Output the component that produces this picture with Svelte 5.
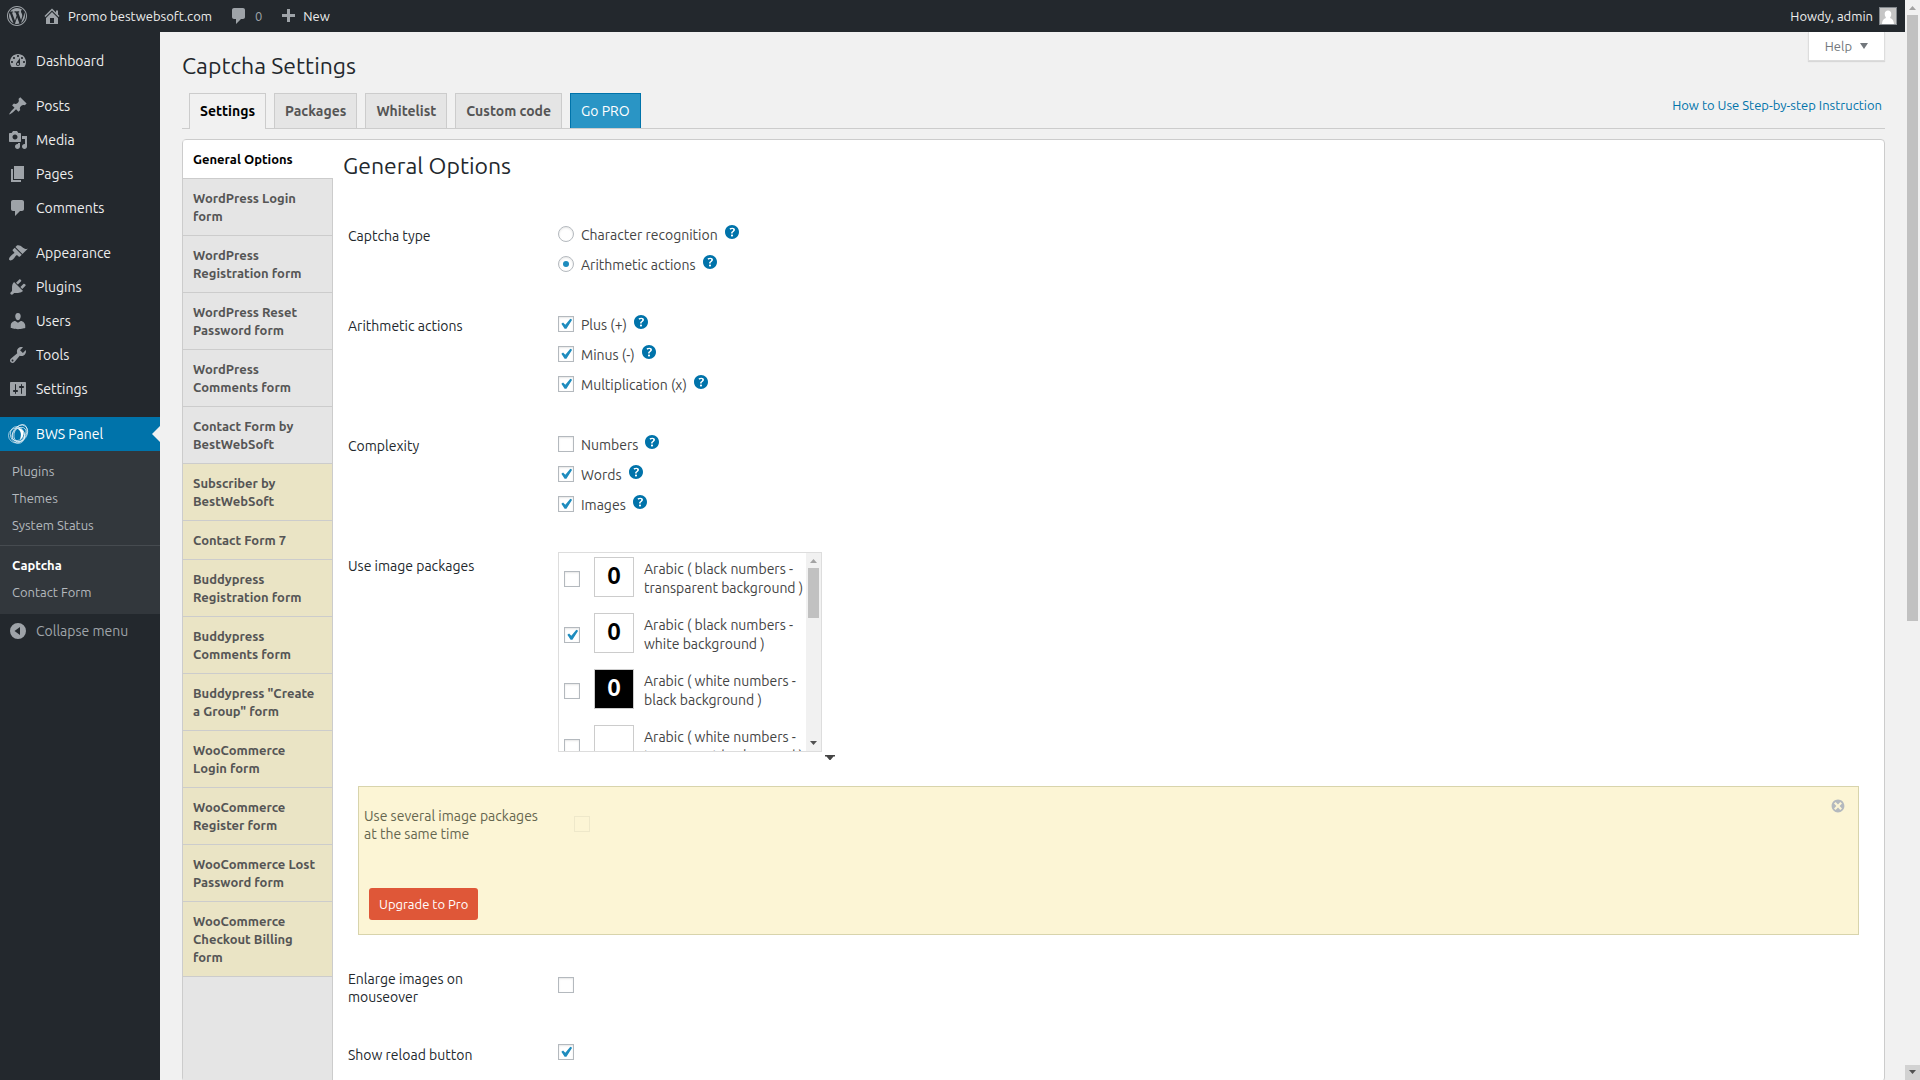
<script lang="ts">
    type MenuItem = { label: string; icon: string; gap?: boolean };

    const icons: Record<string, string> = {
        wordpress: "M20 10c0-5.52-4.48-10-10-10S0 4.48 0 10s4.48 10 10 10 10-4.48 10-10zM10 1.01c4.97 0 8.99 4.02 8.99 8.99s-4.02 8.99-8.99 8.99S1.01 14.97 1.01 10 5.03 1.01 10 1.01zM8.01 14.82L4.96 6.61c.49-.03 1.05-.08 1.05-.08.43-.05.38-1.01-.06-.99 0 0-1.29.1-2.13.1-.15 0-.33 0-.52-.01 1.44-2.17 3.9-3.6 6.7-3.6 2.09 0 3.99.79 5.41 2.09-.6-.08-1.45.35-1.45 1.42 0 .66.38 1.22.79 1.88.31.54.5 1.22.5 2.21 0 1.34-1.27 4.48-1.27 4.48l-2.71-7.5c.48-.03.75-.16.75-.16.43-.05.38-1.1-.05-1.08 0 0-1.3.11-2.14.11-.78 0-2.11-.11-2.11-.11-.43-.02-.48 1.06-.05 1.08l.84.08 1.12 3.04zm6.02 2.15L16.64 10s.67-1.69.39-3.81c.63 1.14.94 2.42.94 3.81 0 2.96-1.56 5.58-3.94 6.97zM2.68 6.77L6.5 17.25c-2.67-1.3-4.47-4.08-4.47-7.25 0-1.16.2-2.23.65-3.23zm7.45 4.53l2.29 6.25c-.75.27-1.57.42-2.42.42-.72 0-1.41-.11-2.06-.3z",
        home: "M16 8.5l1.53 1.53-1.06 1.06L10 4.6l-6.47 6.49-1.06-1.06L10 2.5l4 4v-2h2v4zm-6-2.46l6 5.99V18H4v-5.97zM12 17v-5H8v5h4z",
        plus: "M17 8v3h-5v5H9v-5H4V8h5V3h3v5z",
        dashboard: "M3.76 16h12.48c1.1-1.37 1.76-3.11 1.76-5 0-4.42-3.58-8-8-8s-8 3.58-8 8c0 1.89.66 3.63 1.76 5zM10 4c.55 0 1 .45 1 1s-.45 1-1 1-1-.45-1-1 .45-1 1-1zM6 6c.55 0 1 .45 1 1s-.45 1-1 1-1-.45-1-1 .45-1 1-1zm8 0c.55 0 1 .45 1 1s-.45 1-1 1-1-.45-1-1 .45-1 1-1zm-5.37 5.55L12 7v6c0 1.1-.9 2-2 2s-2-.9-2-2c0-.57.24-1.08.63-1.45zM4 10c.55 0 1 .45 1 1s-.45 1-1 1-1-.45-1-1 .45-1 1-1zm12 0c.55 0 1 .45 1 1s-.45 1-1 1-1-.45-1-1 .45-1 1-1zm-5 3c0-.55-.45-1-1-1s-1 .45-1 1 .45 1 1 1 1-.45 1-1z",
        post: "M10.44 3.02l1.82-1.82 6.36 6.35-1.83 1.82c-1.05-.68-2.48-.57-3.41.36l-.75.75c-.92.93-1.04 2.35-.35 3.41l-1.83 1.82-2.41-2.41-2.8 2.79c-.42.42-3.38 2.71-3.8 2.29s1.86-3.39 2.28-3.81l2.79-2.79L4.1 9.36l1.83-1.82c1.05.69 2.48.57 3.4-.36l.75-.75c.93-.92 1.05-2.35.36-3.41z",
        media: "M13 11V4c0-.55-.45-1-1-1h-1.67L9 1H5L3.67 3H2c-.55 0-1 .45-1 1v7c0 .55.45 1 1 1h10c.55 0 1-.45 1-1zM7 4.5c1.38 0 2.5 1.12 2.5 2.5S8.38 9.5 7 9.5 4.5 8.38 4.5 7 5.62 4.5 7 4.5zM14 6h5v10.5c0 1.38-1.12 2.5-2.5 2.5S14 17.88 14 16.5s1.12-2.5 2.5-2.5c.17 0 .34.02.5.05V9h-3V6zm-4 8.05V13h2v3.5c0 1.38-1.12 2.5-2.5 2.5S7 17.88 7 16.5 8.12 14 9.5 14c.17 0 .34.02.5.05z",
        page: "M6 15V2h10v13H6zm-1 1h8v2H3V5h2v11z",
        comment: "M5 2h9c1.1 0 2 .9 2 2v7c0 1.1-.9 2-2 2h-2l-5 5v-5H5c-1.1 0-2-.9-2-2V4c0-1.1.9-2 2-2z",
        appearance: "M14.48 11.06L7.41 3.99l1.5-1.5c.5-.56 2.3-.47 3.51.32 1.21.8 1.43 1.28 2.91 2.1 1.18.64 2.45 1.26 4.45.85zm-.71.71L6.7 4.7 4.93 6.47c-.39.39-.39 1.02 0 1.41l1.06 1.06c.39.39.39 1.03 0 1.42-.6.6-1.43 1.11-2.21 1.69-.35.26-.7.53-1.01.84C1.43 14.23.4 16.08 1.4 17.07c.99 1 2.84-.03 4.18-1.36.31-.31.58-.66.85-1.02.57-.78 1.08-1.61 1.69-2.21.39-.39 1.02-.39 1.41 0l1.06 1.06c.39.39 1.02.39 1.41 0z",
        plugin: "M13.11 4.36L9.87 7.6 8 5.73l3.24-3.24c.35-.34 1.05-.2 1.56.32.52.51.66 1.21.31 1.55zm-8 1.77l.91-1.12 9.01 9.01-1.19.84c-.71.71-2.63 1.16-3.82 1.16H6.14L4.9 17.26c-.59.59-1.54.59-2.12 0-.59-.58-.59-1.53 0-2.12l1.24-1.24v-3.88c0-1.13.4-3.19 1.09-3.89zm7.26 3.97l3.24-3.24c.34-.35 1.04-.21 1.55.31.52.51.66 1.21.31 1.55l-3.24 3.25z",
        user: "M10 9.25c-2.27 0-2.73-3.44-2.73-3.44C7 4.02 7.82 2 9.97 2c2.16 0 2.98 2.02 2.71 3.81 0 0-.41 3.44-2.68 3.44zm0 2.57L12.72 10c2.39 0 4.52 2.33 4.52 4.53v2.49s-3.65 1.13-7.24 1.13c-3.65 0-7.24-1.13-7.24-1.13v-2.49c0-2.25 1.94-4.48 4.47-4.48z",
        tool: "M16.68 9.77c-1.34 1.34-3.3 1.67-4.95.99l-5.41 6.52c-.99.99-2.59.99-3.58 0s-.99-2.59 0-3.57l6.52-5.42c-.68-1.65-.35-3.61.99-4.95 1.28-1.28 3.12-1.62 4.72-1.06l-2.89 2.89 2.82 2.82 2.86-2.87c.53 1.58.18 3.39-1.08 4.65zM3.81 16.21c.4.39 1.04.39 1.43 0 .4-.4.4-1.04 0-1.43-.39-.4-1.03-.4-1.43 0-.39.39-.39 1.03 0 1.43z",
        settings: "M18 16V4c0-.55-.45-1-1-1H3c-.55 0-1 .45-1 1v12c0 .55.45 1 1 1h14c.55 0 1-.45 1-1zM8 11h1c.55 0 1 .45 1 1s-.45 1-1 1H8v1.5c0 .28-.22.5-.5.5s-.5-.22-.5-.5V13H6c-.55 0-1-.45-1-1s.45-1 1-1h1V5.5c0-.28.22-.5.5-.5s.5.22.5.5V11zm5-2h-1c-.55 0-1-.45-1-1s.45-1 1-1h1V5.5c0-.28.22-.5.5-.5s.5.22.5.5V7h1c.55 0 1 .45 1 1s-.45 1-1 1h-1v5.5c0 .28-.22.5-.5.5s-.5-.22-.5-.5V9z",
        help: "M17 10c0-3.87-3.14-7-7-7-3.87 0-7 3.13-7 7s3.13 7 7 7c3.86 0 7-3.13 7-7zm-6.3 1.48H9.14v-.43c0-.38.08-.7.24-.98s.46-.57.88-.89c.41-.29.68-.53.81-.71.14-.18.2-.39.2-.62 0-.25-.09-.44-.28-.58-.19-.13-.45-.19-.79-.19-.58 0-1.25.19-2 .57l-.64-1.28c.87-.49 1.8-.74 2.77-.74.81 0 1.45.2 1.92.58.48.39.71.91.71 1.55 0 .43-.09.8-.29 1.11-.19.32-.57.67-1.11 1.06-.38.28-.61.49-.71.63-.1.15-.15.34-.15.57v.35zm-1.47 2.74c-.18-.17-.27-.42-.27-.73 0-.33.08-.58.26-.75s.43-.25.77-.25c.32 0 .57.09.75.26s.27.42.27.74c0 .3-.09.55-.27.72-.18.18-.43.27-.75.27-.33 0-.58-.09-.76-.26z",
        dismiss: "M10 2c4.42 0 8 3.58 8 8s-3.58 8-8 8-8-3.58-8-8 3.58-8 8-8zm5 11l-3-3 3-3-2-2-3 3-3-3-2 2 3 3-3 3 2 2 3-3 3 3z",
        collapse: "M10 2a8 8 0 1 0 0 16a8 8 0 1 0 0-16zM12 6v8l-5.500-4z",
    };

    const menu: MenuItem[] = [
        { label: "Dashboard", icon: "dashboard" },
        { label: "Posts", icon: "post", gap: true },
        { label: "Media", icon: "media" },
        { label: "Pages", icon: "page" },
        { label: "Comments", icon: "comment" },
        { label: "Appearance", icon: "appearance", gap: true },
        { label: "Plugins", icon: "plugin" },
        { label: "Users", icon: "user" },
        { label: "Tools", icon: "tool" },
        { label: "Settings", icon: "settings" },
    ];

    const tabs = ["Settings", "Packages", "Whitelist", "Custom code"];

    const sections = [
        { label: "General Options" },
        { label: "WordPress Login form" },
        { label: "WordPress Registration form" },
        { label: "WordPress Reset Password form" },
        { label: "WordPress Comments form" },
        { label: "Contact Form by BestWebSoft" },
        { label: "Subscriber by BestWebSoft", pro: true },
        { label: "Contact Form 7", pro: true },
        { label: "Buddypress Registration form", pro: true },
        { label: "Buddypress Comments form", pro: true },
        { label: 'Buddypress "Create a Group" form', pro: true },
        { label: "WooCommerce Login form", pro: true },
        { label: "WooCommerce Register form", pro: true },
        { label: "WooCommerce Lost Password form", pro: true },
        { label: "WooCommerce Checkout Billing form", pro: true },
    ];

    let captchaType = $state("math");
    const types = [
        { value: "recognition", label: "Character recognition" },
        { value: "math", label: "Arithmetic actions" },
    ];

    const groups = $state([
        {
            title: "Arithmetic actions",
            options: [
                { label: "Plus (+)", checked: true },
                { label: "Minus (-)", checked: true },
                { label: "Multiplication (x)", checked: true },
            ],
        },
        {
            title: "Complexity",
            options: [
                { label: "Numbers", checked: false },
                { label: "Words", checked: true },
                { label: "Images", checked: true },
            ],
        },
    ]);

    const packages = $state([
        { label: "Arabic ( black numbers - transparent background )", checked: false, style: "light" },
        { label: "Arabic ( black numbers - white background )", checked: true, style: "light" },
        { label: "Arabic ( white numbers - black background )", checked: false, style: "dark" },
        { label: "Arabic ( white numbers - transparent background )", checked: false, style: "blank" },
    ]);

    let enlarge = $state(false);
    let reload = $state(true);
</script>

{#snippet icon(name: string)}
    <svg class="icon" viewBox="0 0 20 20" aria-hidden="true">
        <path d={icons[name]} fill-rule={name === "collapse" ? "evenodd" : "nonzero"} />
    </svg>
{/snippet}

{#snippet help()}
    <button class="help" type="button" aria-label="Help">{@render icon("help")}</button>
{/snippet}

{#snippet scrollbar(kind: string)}
    <div class="scrollbar {kind}" aria-hidden="true">
        <svg viewBox="0 0 15 15"><path class="up" d="M4 10h7l-3.500-4z" /></svg>
        <div class="track"><div class="thumb"></div></div>
        <svg class="end" viewBox="0 0 15 15"><path class="down" d="M4 5h7l-3.500 4z" /></svg>
    </div>
{/snippet}

<div class="screen">
    <div class="page">
        <header class="adminbar">
            <a class="wp" href="#about" aria-label="About WordPress">{@render icon("wordpress")}</a>
            <a class="site" href="#site">{@render icon("home")}Promo bestwebsoft.com</a>
            <a class="count" href="#comments">{@render icon("comment")}0</a>
            <a class="new" href="#new">{@render icon("plus")}New</a>
            <a class="account" href="#profile">
                Howdy, admin
                <svg class="avatar" viewBox="0 0 16 16" aria-hidden="true">
                    <rect width="16" height="16" fill="#c5c5c5" />
                    <path d="M8 2.500c2 0 3.300 1.500 3.300 3.500S10 9.500 10 10c1.500.8 3.500 1 4 6H2c.5-5 2.500-5.200 4-6 0-.5-1.300-2-1.300-4S6 2.500 8 2.500z" fill="#fff" />
                </svg>
            </a>
        </header>

        <div class="body">
            <nav class="sidebar">
                {#each menu as item}
                    <a class="menu-item" class:gap={item.gap} href="#{item.icon}">
                        {@render icon(item.icon)}{item.label}
                    </a>
                {/each}
                <a class="menu-item gap current" href="#bws">
                    <svg class="icon bws" viewBox="0 0 20 20" aria-hidden="true">
                        <ellipse cx="8.500" cy="11.500" rx="8" ry="7.500" />
                        <ellipse cx="9.500" cy="11" rx="7" ry="8.500" transform="rotate(-20 9.500 11)" />
                        <ellipse cx="12.500" cy="9" rx="6" ry="9" transform="rotate(25 12.500 9)" />
                        <ellipse cx="12" cy="9.500" rx="7" ry="9" transform="rotate(35 12 9.500)" />
                        <ellipse cx="11" cy="10" rx="5.500" ry="8" transform="rotate(50 11 10)" />
                        <path d="M9.500 4.500c4-.5 6.500 2 6 6-.3 2.500-1.500 4-3.500 5 1.500-4.500 1.500-8-2.500-11z" />
                    </svg>
                    BWS Panel
                </a>
                <div class="submenu">
                    <a href="#plugins">Plugins</a>
                    <a href="#themes">Themes</a>
                    <a href="#status">System Status</a>
                    <hr />
                    <a class="active" href="#captcha">Captcha</a>
                    <a href="#contact">Contact Form</a>
                </div>
                <button class="menu-item collapse" type="button">{@render icon("collapse")}Collapse menu</button>
            </nav>

            <main>
                <div class="heading">
                    <h1>Captcha Settings</h1>
                    <button class="help-tab" type="button">
                        Help
                        <svg viewBox="0 0 8 6" aria-hidden="true"><path d="M0 0h8L4 6z" /></svg>
                    </button>
                </div>

                <nav class="tabs">
                    {#each tabs as tab, i}
                        <a class="tab" class:active={i === 0} href="#{tab}">{tab}</a>
                    {/each}
                    <a class="tab pro" href="#pro">Go PRO</a>
                    <a class="howto" href="#instruction">How to Use Step-by-step Instruction</a>
                </nav>

                <div class="panel">
                    <nav class="sections">
                        {#each sections as section, i}
                            <a class:active={i === 0} class:pro={section.pro} href="#section-{i}">{section.label}</a>
                        {/each}
                    </nav>

                    <form class="options">
                        <h2>General Options</h2>

                        <div class="row" role="radiogroup" aria-labelledby="type-title">
                            <div class="title" id="type-title">Captcha type</div>
                            <div class="choices">
                                {#each types as type}
                                    <div class="choice">
                                        <label>
                                            <input type="radio" name="type" value={type.value} bind:group={captchaType} />
                                            {type.label}
                                        </label>
                                        {@render help()}
                                    </div>
                                {/each}
                            </div>
                        </div>

                        {#each groups as group, i}
                            <div class="row" role="group" aria-labelledby="group-{i}">
                                <div class="title" id="group-{i}">{group.title}</div>
                                <div class="choices">
                                    {#each group.options as option}
                                        <div class="choice">
                                            <label>
                                                <input type="checkbox" bind:checked={option.checked} />
                                                {option.label}
                                            </label>
                                            {@render help()}
                                        </div>
                                    {/each}
                                </div>
                            </div>
                        {/each}

                        <div class="row" role="group" aria-labelledby="packages-title">
                            <div class="title" id="packages-title">Use image packages</div>
                            <div class="packages-wrap">
                                <div class="packages">
                                    <div class="list">
                                        {#each packages as pack}
                                            <label class="package">
                                                <input type="checkbox" bind:checked={pack.checked} />
                                                <span class="sample {pack.style}">0</span>
                                                <span class="name">{pack.label}</span>
                                            </label>
                                        {/each}
                                    </div>
                                    {@render scrollbar("inner")}
                                </div>
                                <svg class="grip" viewBox="0 0 10 5" aria-hidden="true"><path d="M0 0h10v1.500H8.500L5.500 5h-1L1.500 1.500H0z" /></svg>
                            </div>
                        </div>

                        <div class="promo">
                            <div class="promo-row">
                                <label for="several">Use several image packages at the same time</label>
                                <input id="several" type="checkbox" disabled />
                            </div>
                            <button class="dismiss" type="button" aria-label="Close">{@render icon("dismiss")}</button>
                            <a class="upgrade" href="#upgrade">Upgrade to Pro</a>
                        </div>

                        <div class="row single">
                            <label class="title" for="enlarge">Enlarge images on mouseover</label>
                            <input id="enlarge" type="checkbox" bind:checked={enlarge} />
                        </div>
                        <div class="row single">
                            <label class="title" for="reload">Show reload button</label>
                            <input id="reload" type="checkbox" bind:checked={reload} />
                        </div>
                    </form>
                </div>
            </main>
        </div>
    </div>
    {@render scrollbar("outer")}
</div>

<style>
    :global(body) {
        background: #f1f1f1;
        color: #444;
        font: 14px/20px Ubuntu, "Noto Sans", sans-serif;
    }
    * {
        box-sizing: border-box;
    }
    a {
        color: inherit;
        text-decoration: none;
    }
    button {
        padding: 0;
        border: 0;
        background: none;
        color: inherit;
        font: inherit;
        cursor: pointer;
    }
    .icon {
        width: 20px;
        height: 20px;
        fill: #9ea3a8;
        flex: none;
    }
    .screen {
        display: flex;
        height: 100vh;
        overflow: hidden;
    }
    .page {
        flex: 1;
        min-width: 0;
        display: flex;
        flex-direction: column;
    }

    .adminbar {
        display: flex;
        flex: none;
        height: 32px;
        padding: 0 8px 0 7px;
        background: #23282d;
        color: #eee;
        font-size: 13px;
        line-height: 32px;
    }
    .adminbar a {
        display: flex;
        align-items: center;
        gap: 6px;
    }
    .wp {
        margin-right: 15px;
    }
    .site {
        margin-right: 17px;
    }
    .count {
        margin-right: 16px;
        color: #9ea3a8;
    }
    .adminbar .new {
        gap: 5px;
    }
    .account {
        margin-left: auto;
    }
    .avatar {
        width: 18px;
        height: 18px;
        border: 1px solid #82878c;
    }

    .body {
        display: flex;
        flex: 1;
    }
    .sidebar {
        width: 160px;
        flex: none;
        padding-top: 12px;
        background: #23282d;
        color: #eee;
    }
    .menu-item {
        display: flex;
        align-items: center;
        gap: 8px;
        width: 100%;
        height: 34px;
        padding-left: 8px;
    }
    .gap {
        margin-top: 11px;
    }
    .current {
        position: relative;
        background: #0073aa;
        color: #fff;
    }
    .current::after {
        content: "";
        position: absolute;
        right: 0;
        top: 9px;
        border: 8px solid transparent;
        border-left: 0;
        border-right-color: #f1f1f1;
    }
    .bws {
        overflow: visible;
    }
    .bws ellipse {
        fill: none;
        stroke: #fff;
        stroke-width: 0.6;
    }
    .bws path {
        fill: #fff;
    }
    .submenu {
        padding: 7px 0 8px;
        background: #32373c;
        color: #b4b9be;
        font-size: 13px;
        line-height: 27px;
    }
    .submenu a {
        display: block;
        padding-left: 12px;
    }
    .submenu .active {
        color: #fff;
        font-weight: 600;
    }
    .submenu hr {
        margin: 6px 0;
        border: 0;
        border-top: 1px solid #464b50;
    }
    .collapse {
        color: #a0a5aa;
    }

    main {
        display: flex;
        flex-direction: column;
        flex: 1;
        min-width: 0;
        padding: 0 20px 0 22px;
    }
    .heading {
        display: flex;
        justify-content: space-between;
        align-items: flex-start;
    }
    h1,
    h2 {
        margin: 0;
        color: #23282d;
        font-size: 23px;
        font-weight: 400;
        line-height: 29px;
    }
    h1 {
        padding: 19px 0 13px;
    }
    .help-tab {
        display: flex;
        align-items: center;
        gap: 8px;
        height: 29px;
        padding: 0 16px;
        border: 1px solid #ddd;
        border-top: 0;
        background: #fff;
        box-shadow: 0 1px 1px rgba(0, 0, 0, 0.1);
        color: #72777c;
        font-size: 13px;
    }
    .help-tab svg {
        width: 8px;
        height: 6px;
        fill: #72777c;
    }
    .tabs {
        display: flex;
        gap: 8px;
        padding: 0 3px 0 7px;
        border-bottom: 1px solid #ccc;
    }
    .tab {
        padding: 5px 10px;
        border: 1px solid #ccc;
        border-bottom: 0;
        background: #e5e5e5;
        color: #555;
        font-weight: 600;
        line-height: 24px;
    }
    .tab.active {
        margin-bottom: -1px;
        background: #f1f1f1;
        color: #000;
    }
    .tab.pro {
        border-color: #0073aa;
        background: #2a95c5;
        color: #fff;
        font-weight: 400;
    }
    .howto {
        margin-left: auto;
        color: #0073aa;
        font-size: 13px;
        line-height: 24px;
    }

    .panel {
        display: flex;
        flex: 1 0 auto;
        margin-top: 10px;
        border: 1px solid #ccc;
        border-radius: 4px;
        background: #fff;
    }
    .sections {
        width: 150px;
        flex: none;
        border-right: 1px solid #ccc;
        background: #e5e5e5;
        color: #555;
        font-size: 13px;
        font-weight: 600;
        line-height: 18px;
    }
    .sections a {
        display: block;
        padding: 10px;
        border-bottom: 1px solid #ccc;
    }
    .sections .pro {
        background: #eae4c5;
    }
    .sections .active {
        margin-right: -1px;
        border-top-left-radius: 4px;
        background: #fff;
        color: #000;
    }

    .options {
        flex: 1;
        min-width: 0;
        padding: 11px 25px 0 10px;
    }
    h2 {
        margin-bottom: 24px;
    }
    .row {
        display: flex;
        padding-left: 5px;
    }
    .title {
        width: 210px;
        flex: none;
        padding: 23px 60px 17px 0;
        color: #23282d;
        line-height: 18px;
    }
    .single {
        align-items: center;
    }
    .choices {
        padding: 16px 0 14px;
    }
    .choice {
        display: flex;
        align-items: center;
        height: 30px;
    }
    .choice label {
        display: flex;
        align-items: center;
        gap: 7px;
    }
    .choice input {
        margin-bottom: 2px;
    }
    .help {
        width: 20px;
        height: 20px;
        margin: 0 0 6px 4px;
    }
    .help .icon {
        display: block;
        fill: #0073aa;
    }

    input {
        appearance: none;
        flex: none;
        width: 16px;
        height: 16px;
        margin: 0;
        border: 1px solid #b4b9be;
        background: #fff;
        box-shadow: inset 0 1px 2px rgba(0, 0, 0, 0.1);
    }
    input[type="radio"] {
        border-radius: 50%;
    }
    input:checked::before {
        content: "";
        display: block;
    }
    input[type="radio"]:checked::before {
        width: 6px;
        height: 6px;
        margin: 4px;
        border-radius: 50%;
        background: #1e8cbe;
    }
    input[type="checkbox"]:checked::before {
        width: 14px;
        height: 14px;
        background: #1e8cbe;
        clip-path: polygon(81% 12%, 94% 20%, 53% 84%, 40% 84%, 17% 48%, 29% 39%, 45% 56%);
    }

    .packages-wrap {
        display: flex;
        align-items: flex-end;
        padding: 18px 0 34px;
    }
    .packages {
        display: flex;
        width: 264px;
        height: 200px;
        border: 1px solid #ddd;
        background: #fff;
    }
    .list {
        flex: 1;
        padding: 4px 0 0 5px;
        overflow: hidden;
    }
    .package {
        display: grid;
        grid-template-columns: 30px 50px 1fr;
        height: 56px;
        line-height: 19px;
    }
    .package input {
        margin-top: 14px;
    }
    .package .name {
        margin-top: 3px;
    }
    .sample {
        width: 40px;
        height: 40px;
        border: 1px solid #ccc;
        color: #000;
        font-size: 24px;
        font-weight: 700;
        line-height: 36px;
        text-align: center;
    }
    .sample.dark {
        background: #000;
        color: #fff;
    }
    .sample.blank {
        color: #fff;
    }
    .grip {
        width: 10px;
        height: 5px;
        margin: 0 0 -8px 3px;
        fill: #444;
    }

    .promo {
        position: relative;
        margin: 0 0 12px 15px;
        padding: 20px 5px 14px;
        border: 1px solid #d8d4ac;
        background: #fcf5d5;
    }
    .promo-row {
        display: flex;
        height: 81px;
        color: #65664f;
        line-height: 18px;
    }
    .promo-row label {
        width: 210px;
        padding-right: 30px;
    }
    .promo-row input {
        margin-top: 9px;
        border-color: #eee8ca;
        background: none;
        box-shadow: none;
    }
    .dismiss {
        position: absolute;
        top: 11px;
        right: 12px;
    }
    .dismiss .icon {
        display: block;
        width: 16px;
        height: 16px;
        fill: #b4b9be;
    }
    .upgrade {
        display: inline-block;
        margin-left: 5px;
        padding: 0 10px;
        border-radius: 3px;
        background: #df5738;
        color: #fff;
        font-size: 13px;
        line-height: 32px;
        vertical-align: top;
    }

    .scrollbar {
        display: flex;
        flex-direction: column;
        flex: none;
        width: 15px;
        background: #f1f1f1;
    }
    .scrollbar svg {
        display: block;
        width: 15px;
        height: 15px;
    }
    .up {
        fill: #a3a3a3;
    }
    .down {
        fill: #505050;
    }
    .track {
        flex: 1;
        padding: 0 2px;
    }
    .thumb {
        height: 57.7%;
        background: #c1c1c1;
    }
    .inner .thumb {
        height: 30%;
    }
    .outer .end {
        background: #d2d2d2;
    }
</style>
